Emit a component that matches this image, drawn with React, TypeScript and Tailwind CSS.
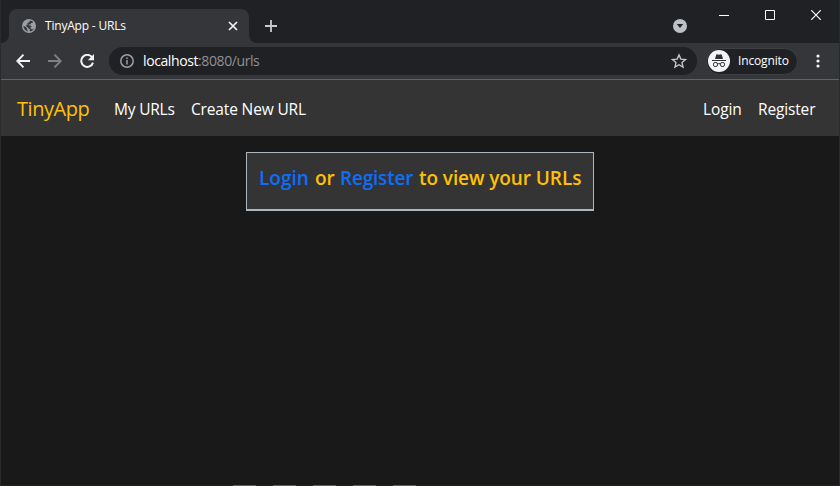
import React from "react";

function Globe() {
  return (
    <svg viewBox="0 0 14 14" className="h-[14px] w-[14px] shrink-0">
      <circle cx="7" cy="7" r="7" fill="#9aa0a6" />
      <path d="M7.8 1.4Q10 1.6 11 2.8L10.4 4H9L8.6 5.2 6.8 5.6 6.6 6.6H8.6L10 7.6V8.6H12.4Q11.8 11.4 8.8 12.4L7.6 11.6 8 10.2 6.6 9.8 6 8.4 4.4 7.6 4 6.2 5.4 5.4 5.6 3.8 7.4 3.2Z" fill="#35363a" />
      <path d="M1.4 6.8 3.8 8 5 9.6 5.2 11 6.4 12.6Q2 12 1.4 6.8Z" fill="#35363a" />
      <path d="M8.4 7.8 12.4 7.2 12.2 9.2 10.2 10.4 8.8 9.8Z" fill="#9aa0a6" />
    </svg>
  );
}

function TabStrip() {
  return (
    <div className="flex h-[43px] shrink-0 bg-[#202124] pt-[9px]">
      <div className="flex w-2 shrink-0 items-end bg-[#35363a]">
        <div className="h-[34px] w-2 rounded-br-lg bg-[#202124]" />
      </div>
      <div className="flex h-[34px] w-[240px] shrink-0 items-center rounded-t-lg bg-[#35363a] pl-[13px]">
        <Globe />
        <span className="ml-[9px] w-[180px] text-[12px] leading-4 tracking-[-0.2px] whitespace-nowrap text-white">TinyApp - URLs</span>
        <svg viewBox="0 0 10 10" className="ml-[3px] h-[10px] w-[10px]" stroke="#f1f3f4" strokeWidth="1.7"><path d="M1 1 9 9M9 1 1 9" /></svg>
      </div>
      <div className="h-[34px] w-2 shrink-0 bg-[#35363a]">
        <div className="h-full w-2 rounded-bl-lg bg-[#202124]" />
      </div>
      <svg viewBox="0 0 12 12" className="mt-[11px] ml-[8px] h-3 w-3" stroke="#c8cacd" strokeWidth="1.8"><path d="M6 0V12M0 6H12" /></svg>
      <div className="flex-1" />
      <svg viewBox="0 0 14 14" className="mt-[10px] h-[14px] w-[14px]"><circle cx="7" cy="7" r="7" fill="#bdc1c6" /><path d="M3.8 5H10.2L7 9Z" fill="#202124" /></svg>
      <svg viewBox="0 0 10 10" className="mt-[1px] ml-[32px] h-[10px] w-[10px]"><path d="M0 5.5H10" stroke="#fff" /></svg>
      <svg viewBox="0 0 10 10" className="mt-[1px] ml-[36px] h-[10px] w-[10px]"><path d="M.5.5H9.5V9.5H.5Z" fill="none" stroke="#fff" /></svg>
      <svg viewBox="0 0 10 10" className="mt-[1px] mr-[18px] ml-[36px] h-[10px] w-[10px]" stroke="#fff" strokeWidth="1.2"><path d="M.2.2 9.8 9.8M9.8.2.2 9.8" /></svg>
    </div>
  );
}

function Toolbar() {
  return (
    <div className="flex h-[37px] shrink-0 items-center border-b border-[#626367] bg-[#35363a]">
      <svg viewBox="0 0 14 14" className="ml-[15px] h-[14px] w-[14px]" fill="none" stroke="#f1f3f4" strokeWidth="1.9"><path d="M14 7H1.5M7.5.7 1.3 7 7.5 13.3" /></svg>
      <svg viewBox="0 0 14 14" className="ml-[18px] h-[14px] w-[14px]" fill="none" stroke="#808185" strokeWidth="1.9"><path d="M0 7H12.5M6.5.7 12.7 7 6.5 13.3" /></svg>
      <svg viewBox="0 0 14 14" className="ml-[18px] h-[14px] w-[14px]"><path d="M12 3.2A6 6 0 1 0 13 8.6" fill="none" stroke="#f1f3f4" strokeWidth="2" /><path d="M14 0V6.2H7.8Z" fill="#f1f3f4" /></svg>
      <div className="ml-[15px] flex h-7 w-[588px] items-center rounded-full bg-[#202124] pl-[11px]">
        <svg viewBox="0 0 14 14" className="h-[14px] w-[14px]"><circle cx="7" cy="7" r="6.2" fill="none" stroke="#9aa0a6" strokeWidth="1.5" /><path d="M7 6V10.5M7 3.4V4.9" stroke="#9aa0a6" strokeWidth="1.5" /></svg>
        <span className="ml-[9px] text-[14px] leading-5 tracking-[-0.4px] whitespace-nowrap text-white">localhost</span>
        <span className="flex-1 text-[14px] leading-5 tracking-[-0.4px] whitespace-nowrap text-[#8e9195]">:8080/urls</span>
        <svg viewBox="0 0 24 24" className="mr-[10px] h-4 w-4" fill="none" stroke="#c5c8cb" strokeWidth="2"><path d="m12 2.8 2.8 6.4 7 .6-5.3 4.6 1.6 6.8-6.1-3.6-6.1 3.6 1.6-6.8-5.3-4.6 7-.6Z" /></svg>
      </div>
      <div className="ml-[9px] flex h-[27px] w-[92px] items-center rounded-full border border-[#3e4044] bg-[#202124] pl-[1px]">
        <svg viewBox="0 0 22 22" className="h-[22px] w-[22px] shrink-0">
          <circle cx="11" cy="11" r="11" fill="#f1f3f4" />
          <path d="M7 9 8.2 4.8 9 4.2 11 4.8 13 4.2 13.8 4.8 15 9Z" fill="#303134" />
          <path d="M4 10.5H18" stroke="#303134" strokeWidth="1" />
          <rect x="5.5" y="12.5" width="4" height="4" rx="1.6" fill="none" stroke="#303134" />
          <rect x="12.5" y="12.5" width="4" height="4" rx="1.6" fill="none" stroke="#303134" />
          <path d="M9.5 14Q11 13.2 12.5 14" stroke="#303134" fill="none" />
        </svg>
        <span className="ml-2 text-[12px] leading-4 tracking-[-0.15px] text-white">Incognito</span>
      </div>
      <svg viewBox="0 0 4 14" className="ml-[17.5px] h-[14px] w-1" fill="#f1f3f4"><circle cx="2" cy="2" r="1.6" /><circle cx="2" cy="7" r="1.6" /><circle cx="2" cy="12" r="1.6" /></svg>
    </div>
  );
}

function Navbar() {
  return (
    <nav className="flex h-14 shrink-0 items-center bg-[#343434] pt-px pr-6 pl-4 text-[15.5px] leading-6 whitespace-nowrap text-white">
      <a className="w-[97px] text-[20px] leading-[30px] tracking-[-0.45px] text-[#ffc107]">TinyApp</a>
      <a className="w-[77px] tracking-[-0.2px]">My URLs</a>
      <a className="flex-1 tracking-[-0.15px]">Create New URL</a>
      <a className="w-[55px] tracking-[-0.1px]">Login</a>
      <a className="w-[57px] tracking-[-0.15px]">Register</a>
    </nav>
  );
}

export default function App() {
  return (
    <div className="flex h-[486px] w-[840px] flex-col overflow-hidden border-x border-[#2b2b2b] bg-[#191919] font-['Open_Sans','Noto_Sans',sans-serif]">
      <TabStrip />
      <Toolbar />
      <Navbar />
      <main className="flex flex-1 items-start justify-center pt-4">
        <div className="flex h-[59px] w-[348px] border border-b-2 border-[#adb5bd] bg-[#343434] pt-[13px] pl-3 text-[19px] leading-6 font-semibold whitespace-nowrap text-[#ffc107]">
          <a className="w-[56px] tracking-[0px] text-[#0d6efd]">Login</a>
          <span className="w-[25px] tracking-[-0.2px]">or</span>
          <a className="w-[79px] tracking-[-0.2px] text-[#0d6efd]">Register</a>
          <span className="tracking-[-0.08px]">to view your URLs</span>
        </div>
      </main>
      <footer className="flex h-px shrink-0 gap-[17px] bg-[#252020] pl-[232px]">
        {[0, 1, 2, 3, 4].map((n) => <div key={n} className="h-px w-[23px] bg-[#625d5d]" />)}
      </footer>
    </div>
  );
}
